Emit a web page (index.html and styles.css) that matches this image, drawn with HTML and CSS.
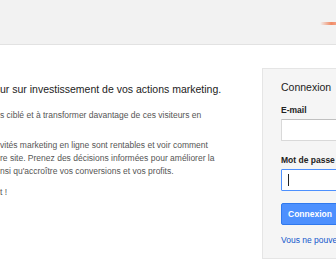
FILE: index.html
```html
<!DOCTYPE html>
<html lang="fr">
<head>
    <meta charset="UTF-8">
    <meta name="viewport" content="width=device-width, initial-scale=1.0">
    <title>Google Analytics</title>
    <link rel="stylesheet" href="styles.css">
</head>
<body>
    <div class="header">
        <div class="logo-streak"></div>
    </div>

    <div class="main">
        <div class="intro">
            <h1>ur sur investissement de vos actions marketing.</h1>
            <p class="lead">s ciblé et à transformer davantage de ces visiteurs en</p>
            <p class="body-text">vités marketing en ligne sont rentables et voir comment<br>re site. Prenez des décisions informées pour améliorer la<br>nsi qu'accroître vos conversions et vos profits.</p>
            <p class="body-text end">t !</p>
        </div>

        <form class="signin">
            <h2>Connexion</h2>

            <label for="email">E-mail</label>
            <input type="text" id="email">

            <label for="password" class="pw-label">Mot de passe</label>
            <div class="pw-field">
                <span class="caret"></span>
            </div>

            <button type="button">Connexion</button>

            <a href="#" class="help-link">Vous ne pouvez pas accéder à votre compte ?</a>
        </form>
    </div>
</body>
</html>
```
FILE: styles.css
```css
* {
    box-sizing: border-box;
    margin: 0;
    padding: 0;
}

body {
    font-family: "Liberation Sans", Arial, sans-serif;
    background-color: #fff;
    overflow: hidden;
    width: 336px;
    height: 280px;
}

.header {
    height: 45px;
    background-color: #f2f2f2;
    border-bottom: 1px solid #e2e2e2;
    display: flex;
    justify-content: flex-end;
    align-items: flex-start;
}

.logo-streak {
    width: 16px;
    height: 3px;
    margin-top: 22px;
    border-radius: 2px 0 0 2px;
    background: linear-gradient(to right, rgba(240, 130, 90, 0), #f08a64 70%, #f4a084);
}

.main {
    display: flex;
    white-space: nowrap;
}

/* Left column, cut off by the window */
.intro {
    width: 262px;
    flex: none;
    padding-top: 38px;
    overflow: hidden;
}

h1 {
    font-size: 10.5px;
    font-weight: normal;
    line-height: 13px;
    color: #222;
}

.lead {
    font-size: 8.5px;
    line-height: 13px;
    color: #555;
    margin-top: 13px;
}

.body-text {
    font-size: 8.5px;
    line-height: 13px;
    color: #555;
    margin-top: 17px;
}

.body-text.end {
    margin-top: 8px;
}

/* Sign-in box */
.signin {
    flex: none;
    width: 220px;
    margin-top: 23px;
    height: 191px;
    padding: 12px 0 0 18px;
    background-color: #f5f5f5;
    border: 1px solid #e5e5e5;
    display: flex;
    flex-direction: column;
    align-items: flex-start;
}

h2 {
    font-size: 10.5px;
    font-weight: normal;
    line-height: 13px;
    color: #222;
}

label {
    font-size: 8.5px;
    font-weight: bold;
    line-height: 11px;
    color: #222;
    margin-top: 11px;
}

.pw-label {
    margin-top: 14px;
}

input[type="text"],
.pw-field {
    width: 180px;
    height: 22px;
    margin-top: 3px;
    background-color: #fff;
    border: 1px solid #d9d9d9;
    border-top-color: #c0c0c0;
    border-radius: 1px;
}

.pw-field {
    border-color: #4d90fe;
    display: flex;
    align-items: center;
    padding-left: 6px;
}

.caret {
    width: 1px;
    height: 12px;
    background-color: #222;
}

button {
    margin-top: 12px;
    height: 22px;
    padding: 0 6px;
    background-color: #4d90fe;
    border: 1px solid #3079ed;
    border-radius: 2px;
    color: #fff;
    font-family: "Liberation Sans", Arial, sans-serif;
    font-size: 8.5px;
    font-weight: bold;
}

.help-link {
    margin-top: 10px;
    font-size: 8.5px;
    color: #15c;
    text-decoration: none;
}
```
